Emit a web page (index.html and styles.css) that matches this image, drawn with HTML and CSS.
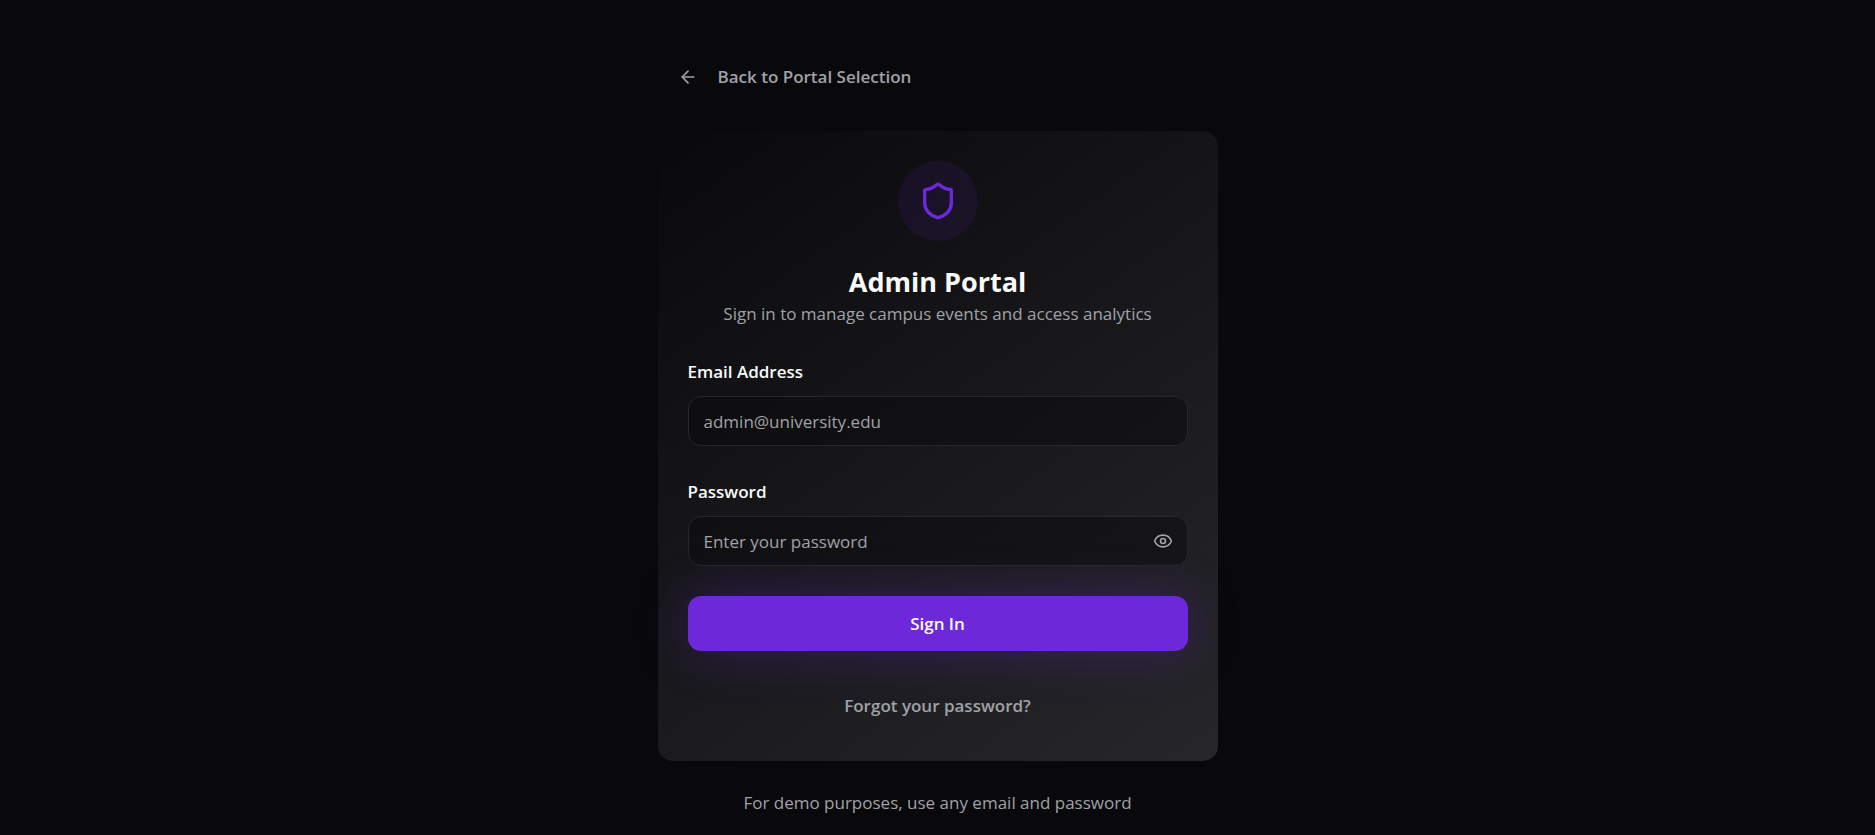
FILE: index.html
```html
<!DOCTYPE html>
<html lang="en">
<head>
<meta charset="utf-8">
<title>Admin Portal</title>
<link rel="stylesheet" href="styles.css">
</head>
<body>
<main class="portal">
  <button class="back" type="button">
    <svg class="icon" viewBox="0 0 24 24" aria-hidden="true"><path d="m12 19-7-7 7-7"/><path d="M19 12H5"/></svg>
    <span>Back to Portal Selection</span>
  </button>
  <section class="card">
    <header class="card-header">
      <div class="badge">
        <svg class="shield" viewBox="0 0 24 24" aria-hidden="true"><path d="M20 13c0 5-3.500 7.500-7.660 8.950a1 1 0 0 1-.67-.01C7.500 20.500 4 18 4 13V6a1 1 0 0 1 1-1c2 0 4.500-1.200 6.240-2.720a1.170 1.170 0 0 1 1.520 0C14.510 3.810 17 5 19 5a1 1 0 0 1 1 1z"/></svg>
      </div>
      <h1 class="title">Admin Portal</h1>
      <p class="subtitle">Sign in to manage campus events and access analytics</p>
    </header>
    <form class="form">
      <div class="field">
        <label class="label" for="email">Email Address</label>
        <input class="input" id="email" type="email" placeholder="admin@university.edu">
      </div>
      <div class="field">
        <label class="label" for="password">Password</label>
        <div class="password">
          <input class="input" id="password" type="password" placeholder="Enter your password">
          <button class="reveal" type="button" aria-label="Show password">
            <svg class="eye" viewBox="0 0 24 24" aria-hidden="true"><path d="M2.062 12.348a1 1 0 0 1 0-.696 10.750 10.750 0 0 1 19.876 0 1 1 0 0 1 0 .696 10.750 10.750 0 0 1-19.876 0"/><circle cx="12" cy="12" r="3"/></svg>
          </button>
        </div>
      </div>
      <button class="submit" type="submit">Sign In</button>
    </form>
    <button class="forgot" type="button">Forgot your password?</button>
  </section>
  <p class="demo">For demo purposes, use any email and password</p>
</main>
</body>
</html>
```
FILE: styles.css
```css
* { box-sizing: border-box; }
body {
  margin: 0;
  min-height: 100vh;
  background: #09090b;
  color: #fafafa;
  font: 17px/24px "Segoe UI", "Open Sans", "Noto Sans", sans-serif;
}
button, input { font: inherit; color: inherit; }
button { border: 0; background: none; padding: 0; cursor: pointer; }
svg { fill: none; stroke: currentColor; stroke-width: 2; stroke-linecap: round; stroke-linejoin: round; }
h1, p { margin: 0; }
.portal { max-width: 560px; margin: 0 auto; padding-top: 54px; }
.back {
  display: flex;
  align-items: center;
  gap: 20px;
  height: 45px;
  padding: 0 20px;
  margin-bottom: 32px;
  color: #a1a1aa;
  font-weight: 600;
}
.icon { width: 20px; height: 20px; }
.card {
  padding: 30px;
  border-radius: 15px;
  background: linear-gradient(145deg, #09090b, #27272a);
  text-align: center;
}
.badge {
  display: grid;
  place-items: center;
  width: 80px;
  height: 80px;
  margin: 0 auto 20px;
  border-radius: 50%;
  background: #6d28d91a;
  color: #6d28d9;
}
.shield { width: 40px; height: 40px; }
.title { font-size: 27px; line-height: 41px; font-weight: 700; }
.subtitle { color: #a1a1aa; }
.card-header { margin-bottom: 30px; }
.form { display: grid; gap: 30px; text-align: left; }
.field { display: grid; gap: 8px; }
.label { font-weight: 600; line-height: 32px; }
.input {
  display: block;
  width: 100%;
  height: 50px;
  padding: 0 15px;
  border: 1px solid #27272a;
  border-radius: 13px;
  background: #09090b80;
}
.input::placeholder { color: #a1a1aa; opacity: 1; }
.password { position: relative; }
.reveal { position: absolute; top: 15px; right: 15px; width: 20px; height: 20px; color: #a1a1aa; }
.eye { display: block; width: 20px; height: 20px; }
.submit {
  height: 55px;
  border-radius: 13px;
  background: #6d28d9;
  font-weight: 600;
  box-shadow: 0 0 50px #6d28d94d;
}
.forgot { display: block; height: 50px; padding: 0 20px; margin: 30px auto 0; color: #a1a1aa; font-weight: 600; }
.demo { padding-top: 30px; text-align: center; color: #a1a1aa; }
```
